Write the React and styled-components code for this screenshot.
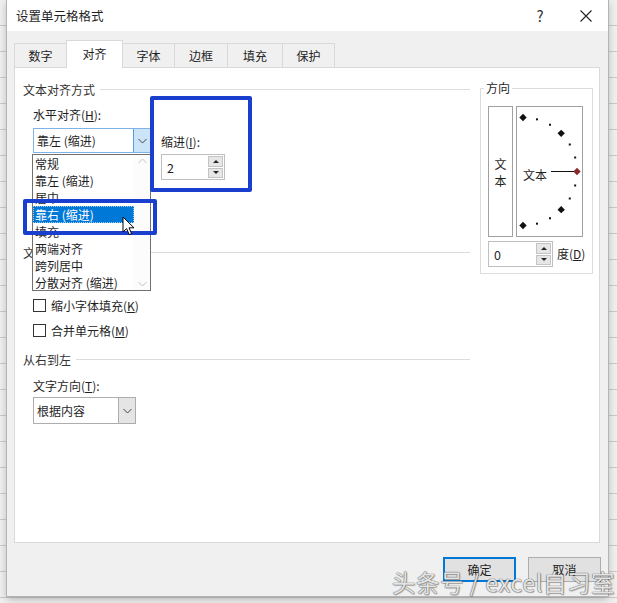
import React from 'react';
import styled, { createGlobalStyle } from 'styled-components';

const Global = createGlobalStyle`
  html, body { margin: 0; padding: 0; }
  body {
    font-family: "Noto Sans CJK SC", "Noto Sans", sans-serif;
    font-size: 12px;
    color: #1f1f1f;
  }
`;

const Sheet = styled.div`
  position: relative;
  width: 617px;
  height: 603px;
  overflow: hidden;
  background: repeating-linear-gradient(to bottom, #efefef 0 25px, #c9c9c9 25px 26px);
`;

const Dialog = styled.div`
  margin-left: 7px;
  width: 601px;
  height: 596px;
  background: #f0f0f0;
  box-shadow: 0 0 0 1px #b4b4b4, 0 3px 8px rgba(0, 0, 0, 0.25);
  display: flex;
  flex-direction: column;
`;

const TitleBar = styled.div`
  height: 31px;
  background: #fff;
  display: flex;
  align-items: center;
  padding: 0 7px 0 9px;
  font-size: 12.5px;
`;

const Title = styled.div`
  flex: 1;
`;

const TitleBtn = styled.div`
  width: 30px;
  height: 31px;
  display: flex;
  align-items: center;
  justify-content: center;
  margin-left: ${p => p.$gap || 0}px;
  font-size: 15px;
  color: #333;
`;

const TabStrip = styled.div`
  height: 36px;
  display: flex;
  align-items: flex-end;
  padding-left: 7px;
`;

const Tab = styled.div`
  position: relative;
  z-index: ${p => (p.$active ? 2 : 1)};
  width: ${p => p.$w}px;
  height: ${p => (p.$active ? 28 : 24)}px;
  margin-bottom: ${p => (p.$active ? -1 : 0)}px;
  margin-left: -1px;
  box-sizing: border-box;
  border: 1px solid #d9d9d9;
  border-bottom: none;
  background: ${p => (p.$active ? '#fff' : '#f0f0f0')};
  display: flex;
  align-items: center;
  justify-content: center;
  padding-bottom: ${p => (p.$active ? 2 : 1)}px;
  &:first-child { margin-left: 0; }
`;

const Panel = styled.div`
  position: relative;
  height: 476px;
  margin: 0 8px 0 7px;
  box-sizing: border-box;
  border: 1px solid #d9d9d9;
  background: #fff;
  display: flex;
  padding: 13px 0 0 8px;
`;

const LeftCol = styled.div`
  width: 447px;
  display: flex;
  flex-direction: column;
`;

const RightCol = styled.div`
  width: 113px;
  margin-left: 10px;
`;

const GroupHeader = styled.div`
  height: 16px;
  display: flex;
  align-items: center;
  margin-top: ${p => p.$mt || 0}px;
  color: #333;
  &::after {
    content: '';
    flex: 1;
    height: 1px;
    background: #dcdcdc;
    margin-left: 5px;
  }
`;

const Indent = styled.div`
  padding-left: 10px;
  display: flex;
  flex-direction: ${p => (p.$row ? 'row' : 'column')};
  height: ${p => (p.$h ? `${p.$h}px` : 'auto')};
`;

const SubCol = styled.div`
  display: flex;
  flex-direction: column;
  width: ${p => (p.$w ? `${p.$w}px` : 'auto')};
  margin-left: ${p => p.$ml || 0}px;
  padding-top: ${p => p.$pt || 0}px;
`;

const Label = styled.div`
  height: 16px;
  line-height: 16px;
  margin-top: ${p => p.$mt || 0}px;
  margin-left: ${p => p.$ml || 0}px;
  white-space: nowrap;
`;

const Combo = styled.div`
  margin-top: ${p => p.$mt || 0}px;
  width: ${p => p.$w}px;
  height: ${p => p.$h}px;
  box-sizing: border-box;
  border: 1px solid ${p => (p.$open ? '#7eb4ea' : '#adadad')};
  background: #fff;
  display: flex;
  align-items: center;
`;

const ComboText = styled.div`
  flex: 1;
  padding-left: 3px;
`;

const ComboBtn = styled.div`
  width: ${p => p.$w}px;
  height: 100%;
  box-sizing: border-box;
  border-left: 1px solid ${p => (p.$open ? '#569de5' : '#adadad')};
  background: ${p => (p.$open ? '#cce4f7' : '#e5e5e5')};
  display: flex;
  align-items: center;
  justify-content: center;
`;

const Spin = styled.div`
  margin-top: ${p => p.$mt || 0}px;
  width: ${p => p.$w}px;
  height: 26px;
  box-sizing: border-box;
  border: 1px solid #bfbfbf;
  display: flex;
  background: #fff;
`;

const SpinValue = styled.div`
  flex: 1;
  padding-left: 5px;
  display: flex;
  align-items: center;
  font-size: 12.5px;
`;

const SpinBtns = styled.div`
  width: 15px;
  display: flex;
  flex-direction: column;
  gap: 1px;
  padding: 1px;
`;

const SpinBtn = styled.div`
  flex: 1;
  background: #e6e6e6;
  border: 1px solid #c4c4c4;
  display: flex;
  align-items: center;
  justify-content: center;
  &::after {
    content: '';
    border-left: 3px solid transparent;
    border-right: 3px solid transparent;
    ${p => (p.$down ? 'border-top: 3px solid #222;' : 'border-bottom: 3px solid #222;')}
  }
`;

const CheckRow = styled.div`
  height: 25px;
  display: flex;
  align-items: center;
  margin-top: ${p => p.$mt || 0}px;
`;

const Box = styled.div`
  width: 13px;
  height: 13px;
  box-sizing: border-box;
  border: 1px solid #333;
  margin-right: 5px;
  background: #fff;
`;

const List = styled.div`
  position: absolute;
  left: 17px;
  top: 86px;
  width: 119px;
  height: 137px;
  box-sizing: border-box;
  border: 1px solid #707070;
  background: #fff;
  display: flex;
  z-index: 3;
`;

const Items = styled.div`
  flex: 1;
`;

const Item = styled.div`
  height: 17px;
  line-height: 17px;
  padding-left: 2px;
  white-space: nowrap;
  background: ${p => (p.$sel ? '#0078d7' : 'transparent')};
  color: ${p => (p.$sel ? '#fff' : '#1f1f1f')};
  outline: ${p => (p.$sel ? '1px dotted #9fc9ef' : 'none')};
  outline-offset: -1px;
`;

const ScrollBar = styled.div`
  width: 16px;
  background: #fcfcfc;
  display: flex;
  flex-direction: column;
  justify-content: space-between;
  align-items: center;
  padding: 3px 0;
`;

const Mark = styled.div`
  position: absolute;
  z-index: 5;
  left: ${p => p.$x}px;
  top: ${p => p.$y}px;
  width: ${p => p.$w}px;
  height: ${p => p.$h}px;
  box-sizing: border-box;
  border: 4px solid #1a3fce;
  border-radius: 2px;
`;

const Cursor = styled.svg`
  position: absolute;
  z-index: 6;
  left: 107px;
  top: 148px;
`;

const GroupBox = styled.div`
  position: relative;
  margin-top: 7px;
  height: 186px;
  box-sizing: border-box;
  border: 1px solid #dcdcdc;
  padding: 17px 0 0 7px;
`;

const GroupTitle = styled.div`
  position: absolute;
  top: -9px;
  left: 3px;
  padding: 0 2px;
  background: #fff;
  line-height: 16px;
`;

const OrientRow = styled.div`
  display: flex;
  gap: 3px;
  height: 131px;
`;

const Frame = styled.div`
  width: ${p => p.$w}px;
  height: 100%;
  box-sizing: border-box;
  border: 1px solid #a0a0a0;
  display: flex;
  align-items: center;
  justify-content: center;
`;

const Stack = styled.div`
  display: flex;
  flex-direction: column;
  line-height: 17px;
`;

const DegRow = styled.div`
  display: flex;
  align-items: center;
  margin-top: 4px;
`;

const Footer = styled.div`
  height: 53px;
  display: flex;
  justify-content: flex-end;
  align-items: flex-start;
  gap: 12px;
  padding: 14px 7px 0 0;
  box-sizing: border-box;
`;

const Button = styled.div`
  width: 73px;
  height: 25px;
  box-sizing: border-box;
  border: ${p => (p.$primary ? '2px solid #0078d7' : '1px solid #adadad')};
  background: #e1e1e1;
  display: flex;
  align-items: center;
  justify-content: center;
`;

const Watermark = styled.div`
  position: absolute;
  left: 392px;
  top: 567px;
  font-size: 23.5px;
  line-height: 30px;
  letter-spacing: 0.5px;
  color: rgba(255, 255, 255, 0.85);
  text-shadow: 0 0 1px #555, 0 0 1px #555, 1px 1px 1px rgba(0, 0, 0, 0.25);
  white-space: nowrap;
  z-index: 10;
`;

const Chevron = ({ color = '#444', up }) => (
  <svg width="9" height="6" viewBox="0 0 9 6">
    <path d={up ? 'M0.5 5 L4.5 1 L8.5 5' : 'M0.5 1 L4.5 5 L8.5 1'} fill="none" stroke={color} strokeWidth="1" />
  </svg>
);

const Dial = () => {
  const cx = 6;
  const cy = 64.5;
  const r = 54;
  const pts = [];
  for (let a = -90; a <= 90; a += 15) {
    const rad = (a * Math.PI) / 180;
    const x = cx + r * Math.cos(rad);
    const y = cy + r * Math.sin(rad);
    const big = a % 45 === 0;
    pts.push(
      big ? (
        <rect key={a} x={x - 2.6} y={y - 2.6} width="5.2" height="5.2" transform={`rotate(45 ${x} ${y})`} fill={a === 0 ? '#8a2a2a' : '#111'} />
      ) : (
        <rect key={a} x={x - 1} y={y - 1} width="2" height="2" fill="#111" />
      )
    );
  }
  return (
    <svg width="65" height="129" viewBox="0 0 65 129">
      {pts}
      <text x="6" y="73" fontSize="12" fill="#1f1f1f" fontFamily='"Noto Sans CJK SC", sans-serif'>文本</text>
      <line x1="34" y1={cy} x2="57" y2={cy} stroke="#111" strokeWidth="1" />
    </svg>
  );
};

const tabs = [
  ['数字', 53],
  ['对齐', 57],
  ['字体', 53],
  ['边框', 54],
  ['填充', 56],
  ['保护', 53],
];

const items = ['常规', '靠左 (缩进)', '居中', '靠右 (缩进)', '填充', '两端对齐', '跨列居中', '分散对齐 (缩进)'];

export default function App() {
  return (
    <Sheet>
      <Global />
      <Dialog>
        <TitleBar>
          <Title>设置单元格格式</Title>
          <TitleBtn>?</TitleBtn>
          <TitleBtn $gap={16}>
            <svg width="12" height="12" viewBox="0 0 12 12">
              <path d="M0.5 0.5 L11.5 11.5 M11.5 0.5 L0.5 11.5" stroke="#222" strokeWidth="1.1" />
            </svg>
          </TitleBtn>
        </TitleBar>
        <TabStrip>
          {tabs.map(([t, w]) => (
            <Tab key={t} $w={w} $active={t === '对齐'}>{t}</Tab>
          ))}
        </TabStrip>
        <Panel>
          <LeftCol>
            <GroupHeader>文本对齐方式</GroupHeader>
            <Indent $row $h={147}>
              <SubCol $w={118}>
                <Label $mt={10}>水平对齐(<u>H</u>):</Label>
                <Combo $mt={5} $w={118} $h={25} $open>
                  <ComboText>靠左 (缩进)</ComboText>
                  <ComboBtn $w={17} $open>
                    <Chevron />
                  </ComboBtn>
                </Combo>
              </SubCol>
              <SubCol $ml={10} $pt={37}>
                <Label>缩进(<u>I</u>):</Label>
                <Spin $mt={4} $w={64}>
                  <SpinValue>2</SpinValue>
                  <SpinBtns>
                    <SpinBtn />
                    <SpinBtn $down />
                  </SpinBtns>
                </Spin>
              </SubCol>
            </Indent>
            <GroupHeader>文本控制</GroupHeader>
            <Indent>
              <CheckRow $mt={33}>
                <Box />缩小字体填充(<u>K</u>)
              </CheckRow>
              <CheckRow>
                <Box />合并单元格(<u>M</u>)
              </CheckRow>
            </Indent>
            <GroupHeader $mt={8}>从右到左</GroupHeader>
            <Indent>
              <Label $mt={11}>文字方向(<u>T</u>):</Label>
              <Combo $mt={3} $w={103} $h={27}>
                <ComboText>根据内容</ComboText>
                <ComboBtn $w={17}>
                  <Chevron />
                </ComboBtn>
              </Combo>
            </Indent>
          </LeftCol>
          <RightCol>
            <GroupBox>
              <GroupTitle>方向</GroupTitle>
              <OrientRow>
                <Frame $w={25}>
                  <Stack>
                    <span>文</span>
                    <span>本</span>
                  </Stack>
                </Frame>
                <Frame $w={67}>
                  <Dial />
                </Frame>
              </OrientRow>
              <DegRow>
                <Spin $w={65}>
                  <SpinValue>0</SpinValue>
                  <SpinBtns>
                    <SpinBtn />
                    <SpinBtn $down />
                  </SpinBtns>
                </Spin>
                <Label $ml={4}>度(<u>D</u>)</Label>
              </DegRow>
            </GroupBox>
          </RightCol>

          <List>
            <Items>
              {items.map(t => (
                <Item key={t} $sel={t === '靠右 (缩进)'}>{t}</Item>
              ))}
            </Items>
            <ScrollBar>
              <Chevron up color="#c2c2c2" />
              <Chevron color="#c2c2c2" />
            </ScrollBar>
          </List>
          <Mark $x={135} $y={28} $w={102} $h={96} />
          <Mark $x={8} $y={131} $w={134} $h={36} />
          <Cursor width="14" height="20" viewBox="0 0 14 20">
            <path d="M1 1 L1 16 L4.6 12.6 L7.2 18.6 L9.6 17.6 L7 11.8 L12 11.8 Z" fill="#fff" stroke="#000" strokeWidth="1" strokeLinejoin="round" />
          </Cursor>
        </Panel>
        <Footer>
          <Button $primary>确定</Button>
          <Button>取消</Button>
        </Footer>
      </Dialog>
      <Watermark>头条号 / excel自习室</Watermark>
    </Sheet>
  );
}
